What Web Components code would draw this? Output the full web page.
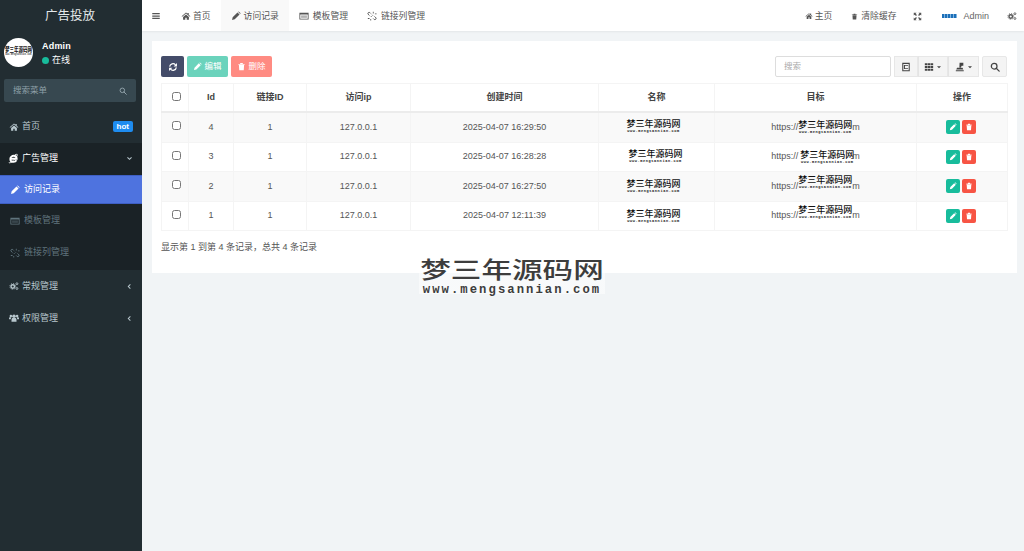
<!DOCTYPE html>
<html lang="zh">
<head>
<meta charset="utf-8">
<title>广告投放</title>
<style>
  html, body { margin: 0; height: 100%; overflow: hidden; }
  body {
    display: flex;
    background: #f1f4f6;
    color: #555;
    font: 9px/1.4 "Liberation Sans", "Noto Sans CJK SC", sans-serif;
  }
</style>
</head>
<body>
<ad-sidebar></ad-sidebar>
<ad-main>
  <ad-topbar></ad-topbar>
  <ad-card>
    <ad-toolbar></ad-toolbar>
    <ad-table></ad-table>
    <ad-pager>显示第 1 到第 4 条记录，总共 4 条记录</ad-pager>
  </ad-card>
</ad-main>
<ad-logo class="mark" size="30.6"></ad-logo>

<script>
const ICONS = {
  bars: '<path d="M3 5h18v3H3zM3 10.500h18v3H3zM3 16h18v3H3z"/>',
  home: '<path d="M12 3.500 1.500 12.500l1.200 1.400L12 6l9.300 7.900 1.200-1.400L18.500 9V4.500h-3v2zM5 14.500V21h5.300v-5h3.400v5H19v-6.500l-7-6z"/>',
  pencil: '<path d="M2.500 21.500 4 15 15.500 3.500l5 5L9 20zM17 2l1.500-1 4.500 4.500L22 7z"/>',
  table: '<path fill-rule="evenodd" d="M1 4h22v16.500H1zM3 8.500v10h18v-10z"/><path d="M5 10.500h14v6H5z" opacity=".45"/>',
  chain: '<g fill="none" stroke="currentColor" stroke-width="2.300"><path d="M9 6 6.500 3.500a3 3 0 0 0-4 4L6 11"/><path d="M15 18l2.500 2.500a3 3 0 0 0 4-4L18 13"/><path d="M11 14l-2-2M14 11l-2-2"/></g><path d="M14 2h2v4h-2zM19 6h4v2h-4zM2 17h4v2H2zM8 19h2v4H8z"/>',
  cogs: '<g fill="none" stroke="currentColor"><circle cx="9" cy="13" r="4.200" stroke-width="3.400"/><circle cx="9" cy="13" r="7" stroke-width="2" stroke-dasharray="2.500 3"/><circle cx="19" cy="6.500" r="2.300" stroke-width="2"/><circle cx="19" cy="18" r="2.300" stroke-width="2"/></g>',
  users: '<circle cx="12" cy="8" r="4.200"/><circle cx="4.500" cy="7" r="3"/><circle cx="19.500" cy="7" r="3"/><path d="M6 21v-5c0-3 2-4 3.500-4h5c1.500 0 3.500 1 3.500 4v5zM0 15v-2.500C0 11 1 10 2.500 10h3.300C4.800 11.500 4.300 13 4.500 15zM24 15v-2.500c0-1.500-1-2.500-2.500-2.500h-3.300c1 1.500 1.500 3 1.300 5z"/>',
  trash: '<path d="M5 7.500h14L18 22H6zM9 2.500h6L16 5h5v1.500H3V5h5z"/>',
  refresh: '<g fill="none" stroke="currentColor" stroke-width="3"><path d="M4 11a8 8 0 0 1 14-4"/><path d="M20 13a8 8 0 0 1-14 4"/></g><path d="M21.500 2.500v8h-8zM2.500 21.500v-8h8z"/>',
  expand: '<path d="M2 2h7.500L7 4.500l3.500 3.500L8 10.500 4.500 7 2 9.500zM22 2v7.500L19.500 7 16 10.500 13.500 8 17 4.500 14.500 2zM2 22v-7.500L4.500 17 8 13.500l2.500 2.500L7 19.500 9.500 22zM22 22h-7.500l2.500-2.500-3.500-3.500 2.500-2.500 3.500 3.500 2.500-2.500z"/>',
  search: '<g fill="none" stroke="currentColor" stroke-width="3"><circle cx="10" cy="10" r="6.800"/><path d="m15 15 7 7" stroke-linecap="round"/></g>',
  grid: '<path d="M2 3h6v5H2zM9 3h6v5H9zM16 3h6v5h-6zM2 9.500h6v5H2zM9 9.500h6v5H9zM16 9.500h6v5h-6zM2 16h6v5H2zM9 16h6v5H9zM16 16h6v5h-6z"/>',
  card: '<path fill-rule="evenodd" d="M3 2h18v20H3zM5.500 4.500v15h13v-15z"/><path d="M7 7h10v2H7zM7 15h10v2H7zM7 7h2.500v10H7z"/>',
  stamp: '<path d="M11 2h9v7h-4l-2 4h-3.500zM5 14h13l2 4H3zM2 19.500h19V22H2z"/>',
  ie: '<g fill="none" stroke="currentColor"><path stroke-width="4" d="M5 12.500h14c0-4-3-6.500-6.500-6.500S5 9 5 13c0 4 3 6.500 7 6.500 3 0 5-1 6.500-3.500"/><path stroke-width="1.800" d="M3 20C1 23 6 22 12 16s10-12 8-13c-1-.5-3 0-5 1"/></g>',
  chevronDown: '<path fill="none" stroke="currentColor" stroke-width="3.600" d="m5 8 7 7 7-7"/>',
  chevronLeft: '<path fill="none" stroke="currentColor" stroke-width="3.600" d="m15 5-7 7 7 7"/>',
  caret: '<path d="M4 9h16l-8 8z"/>'
}

/* every element gets its shadow root the same way */
class AdElement extends HTMLElement {
  constructor () {
    super()
    this.attachShadow({ mode: 'open' }).innerHTML = this.render()
  }
}

class AdIcon extends AdElement {
  render () {
    const name = this.getAttribute('name')
    const size = this.getAttribute('size') || 10
    return `<style>:host { display: inline-flex; flex: none; } svg { display: block; fill: currentColor; }</style>
      <svg width="${size}" height="${size}" viewBox="0 0 24 24">${ICONS[name]}</svg>`
  }
}

class AdLogo extends AdElement {
  render () {
    const size = Number(this.getAttribute('size') || 9)
    return `<style>
      :host {
        display: inline-flex;
        flex: none;
        flex-direction: column;
        align-items: center;
        color: #111;
        font-family: "Liberation Sans", "Noto Sans CJK SC", sans-serif;
        font-weight: 500;
        line-height: 1;
      }
      :host(.mark) {
        position: absolute;
        left: 419px;
        top: 258px;
        width: 186px;
        height: 36px;
        color: #3d3d3d;
        background: linear-gradient(transparent 42%, rgba(255, 255, 255, .5) 42%);
      }
      :host(.mark) b { transform: scaleY(.75); transform-origin: top; margin-bottom: -7px; }
      :host(.round) { font-weight: 700; transform: scaleY(1.500); }
      b { font-size: ${size}px; font-weight: inherit; white-space: nowrap; }
      i {
        margin-top: ${size * 0.07}px;
        font: bold ${size * 0.4}px/1.100 "Liberation Mono", monospace;
        letter-spacing: ${size * 0.067}px;
        white-space: nowrap;
      }
    </style><b>梦三年源码网</b><i>www.mengsannian.com</i>`
  }
}

class AdMenuItem extends AdElement {
  render () {
    const icon = this.getAttribute('icon')
    const arrow = this.getAttribute('arrow')
    const badge = this.getAttribute('badge')
    return `<style>
      :host {
        display: flex;
        align-items: center;
        gap: 3px;
        height: var(--h, 32px);
        padding: 0 9px;
        color: #b8c7ce;
      }
      :host([sub]) { padding-left: 10px; gap: 4px; color: #60747d; }
      :host([open]) {
        box-sizing: border-box;
        padding: 0 9px 2px 8px;
        background: #1a2226;
        color: #fff;
      }
      :host([active]) {
        background: #4e73df;
        color: #fff;
        border-top: 1px solid #3e5fc4;
        border-bottom: 1px solid #3e5fc4;
        box-sizing: border-box;
      }
      .text { flex: 1; }
      .badge {
        background: #1e8cf0;
        color: #fff;
        border-radius: 2px;
        padding: 0 4px;
        font-size: 8px;
        font-weight: bold;
        line-height: 11px;
      }
      .arrow { color: #b8c7ce; }
    </style>
    <ad-icon name="${icon}" size="${this.getAttribute('icon-size') || 10}"></ad-icon>
    <span class="text"><slot></slot></span>
    ${badge ? `<span class="badge">${badge}</span>` : ''}
    ${arrow ? `<ad-icon class="arrow" name="${arrow}" size="7"></ad-icon>` : ''}`
  }
}

class AdSidebar extends AdElement {
  render () {
    return `<style>
      :host {
        display: block;
        flex: none;
        width: 142px;
        height: 100%;
        background: #222d32;
        color: #b8c7ce;
      }
      .brand {
        height: 31px;
        padding-right: 2px;
        line-height: 33px;
        text-align: center;
        color: #e4e9eb;
        font-size: 12.500px;
      }
      .user { display: flex; gap: 9px; padding: 7px 4px 0; height: 41px; }
      .avatar {
        flex: none;
        display: flex;
        align-items: center;
        justify-content: center;
        width: 29px;
        height: 29px;
        border-radius: 50%;
        background: #fff;
        overflow: hidden;
      }
      .info { padding-top: 1px; color: #fff; line-height: 14px; }
      .info b { display: block; letter-spacing: .2px; }
      .online { display: flex; align-items: center; gap: 3px; }
      .dot { width: 7px; height: 7px; border-radius: 50%; background: #18bc9c; }
      .search {
        display: flex;
        align-items: center;
        justify-content: space-between;
        height: 23px;
        margin: 0 6px 8px 4px;
        padding: 0 9px;
        border-radius: 2px;
        background: #374850;
        color: #8fa0a8;
      }
      .search span { font-size: 8.500px; }
      .sub { background: #1a2226; padding-bottom: 2px; }
    </style>
    <div class="brand">广告投放</div>
    <div class="user">
      <div class="avatar"><ad-logo class="round" size="4.500"></ad-logo></div>
      <div class="info"><b>Admin</b><span class="online"><span class="dot"></span>在线</span></div>
    </div>
    <div class="search"><span>搜索菜单</span><ad-icon name="search" size="8"></ad-icon></div>
    <ad-menu-item icon="home" badge="hot" style="--h: 33px">首页</ad-menu-item>
    <ad-menu-item icon="ie" icon-size="11" arrow="chevronDown" open>广告管理</ad-menu-item>
    <div class="sub">
      <ad-menu-item icon="pencil" sub active style="--h: 29px">访问记录</ad-menu-item>
      <ad-menu-item icon="table" sub style="--h: 33px">模板管理</ad-menu-item>
      <ad-menu-item icon="chain" sub style="--h: 31px">链接列管理</ad-menu-item>
    </div>
    <ad-menu-item icon="cogs" arrow="chevronLeft">常规管理</ad-menu-item>
    <ad-menu-item icon="users" arrow="chevronLeft">权限管理</ad-menu-item>`
  }
}

class AdMain extends AdElement {
  render () {
    return `<style>
      :host { display: flex; flex-direction: column; flex: 1; min-width: 0; }
    </style><slot></slot>`
  }
}

class AdTopbar extends AdElement {
  render () {
    return `<style>
      :host {
        display: flex;
        align-items: stretch;
        height: 31px;
        background: #fff;
        box-shadow: 0 1px 2px rgba(0, 0, 0, .06);
        color: #555;
        font-size: 8.800px;
      }
      .item {
        display: flex;
        align-items: center;
        gap: 4px;
        box-sizing: border-box;
        padding: 1px 10px 0;
      }
      .on { background: #f9f9f9; }
      .spacer { flex: 1; }
      .mini {
        width: 15px;
        height: 4px;
        background: repeating-linear-gradient(90deg, #1d6fb8 0 2px, #7fb4e0 2px 3px);
      }
      .admin { gap: 6px; padding: 1px 9px 0 10px; color: #666; font-size: 9px; }
    </style>
    <div class="item" style="padding: 1px 10px 0 9px"><ad-icon name="bars"></ad-icon></div>
    <div class="item" style="gap: 2px"><ad-icon name="home"></ad-icon>首页</div>
    <div class="item on" style="gap: 3px"><ad-icon name="pencil"></ad-icon>访问记录</div>
    <div class="item"><ad-icon name="table"></ad-icon>模板管理</div>
    <div class="item" style="padding-left: 9px"><ad-icon name="chain"></ad-icon>链接列管理</div>
    <div class="spacer"></div>
    <div class="item" style="gap: 2px"><ad-icon name="home" size="8"></ad-icon>主页</div>
    <div class="item" style="gap: 3px; padding: 1px 7px 0 9px"><ad-icon name="trash" size="7"></ad-icon>清除缓存</div>
    <div class="item"><ad-icon name="expand" size="9"></ad-icon></div>
    <div class="item admin"><span class="mini"></span>Admin</div>
    <div class="item" style="padding: 1px 7px 0 9px"><ad-icon name="cogs" size="10"></ad-icon></div>`
  }
}

class AdCard extends AdElement {
  render () {
    return `<style>
      :host {
        display: block;
        margin: 10px 7px 0 10px;
        padding: 15px 10px 0 9px;
        height: 232px;
        box-sizing: border-box;
        background: #fff;
      }
    </style><slot></slot>`
  }
}

class AdButton extends AdElement {
  render () {
    return `<style>
      :host {
        display: inline-flex;
        align-items: center;
        justify-content: center;
        gap: 2px;
        box-sizing: border-box;
        height: 21px;
        border-radius: 2px;
        color: #fff;
        background: var(--bg);
        border: 1px solid var(--line, transparent);
        font-size: 8.500px;
      }
    </style><slot></slot>`
  }
}

class AdToolbar extends AdElement {
  render () {
    return `<style>
      :host { display: flex; align-items: center; gap: 3px; height: 21px; margin-bottom: 6px; }
      .spacer { flex: 1; }
      .input {
        box-sizing: border-box;
        width: 116px;
        height: 21px;
        padding: 0 8px;
        line-height: 19px;
        border: 1px solid #ddd;
        border-radius: 2px;
        color: #aaa;
        font-size: 8.500px;
      }
      .group { display: flex; }
      ad-button.tool { --bg: #f4f4f4; --line: #e7e7e7; color: #444; border-radius: 0; }
      .group ad-button + ad-button { border-left: 1px solid #e4e4e4; }
    </style>
    <ad-button style="--bg: #444c69; width: 23px"><ad-icon name="refresh"></ad-icon></ad-button>
    <ad-button style="--bg: #6bd3bc; width: 41px"><ad-icon name="pencil" size="9"></ad-icon>编辑</ad-button>
    <ad-button style="--bg: #ff8b82; width: 41px"><ad-icon name="trash" size="9"></ad-icon>删除</ad-button>
    <div class="spacer"></div>
    <div class="input">搜索</div>
    <div class="group">
      <ad-button class="tool" style="width: 24px"><ad-icon name="card"></ad-icon></ad-button>
      <ad-button class="tool" style="width: 30px"><ad-icon name="grid"></ad-icon><ad-icon name="caret" size="6"></ad-icon></ad-button>
      <ad-button class="tool" style="width: 31px"><ad-icon name="stamp"></ad-icon><ad-icon name="caret" size="6"></ad-icon></ad-button>
    </div>
    <ad-button class="tool" style="width: 25px; border-radius: 2px"><ad-icon name="search"></ad-icon></ad-button>`
  }
}

/* nudges: the two logos of a row are not quite aligned in the reference */
const RECORDS = [
  { id: 4, time: '2025-04-07 16:29:50', nameX: 6, nameY: 0, targetX: 0, targetY: 1 },
  { id: 3, time: '2025-04-07 16:28:28', nameX: 2, nameY: 0, targetX: 2, targetY: 2 },
  { id: 2, time: '2025-04-07 16:27:50', nameX: 6, nameY: 2, targetX: 0, targetY: -7 },
  { id: 1, time: '2025-04-07 12:11:39', nameX: 6, nameY: 3, targetX: 0, targetY: -6 }
]

class AdTable extends AdElement {
  render () {
    const rows = RECORDS.map((r) => `<tr>
      <td><input type="checkbox"></td>
      <td>${r.id}</td>
      <td>1</td>
      <td>127.0.0.1</td>
      <td>${r.time}</td>
      <td><div class="cell"><ad-logo style="margin: ${r.nameY}px ${r.nameX}px 0 0"></ad-logo></div></td>
      <td><div class="cell">https://<ad-logo style="margin: ${r.targetY}px ${-r.targetX}px 0 ${r.targetX}px"></ad-logo>m</div></td>
      <td><span class="ops"><ad-button style="--bg: #18bc9c; width: 14px; height: 14px"><ad-icon name="pencil" size="8"></ad-icon></ad-button><ad-button style="--bg: #f75444; width: 14px; height: 14px"><ad-icon name="trash" size="8"></ad-icon></ad-button></span></td>
    </tr>`).join('')
    return `<style>
      :host { display: block; }
      table { width: 846px; table-layout: fixed; border-collapse: collapse; color: #555; }
      th, td { border: 1px solid #f4f4f4; text-align: center; padding: 0; }
      th { height: 27px; color: #444; font-weight: bold; border-bottom: 2px solid #ececec; }
      td { height: 28.500px; }
      tbody tr:nth-child(odd) td { background: #f9f9f9; }
      input { display: block; width: 9px; height: 9px; margin: -2px auto 0 9.500px; }
      tbody input { margin-top: -3px; }
      .cell { display: flex; align-items: center; justify-content: center; height: 28px; }
      .ops { display: inline-flex; gap: 2px; margin-right: 2px; vertical-align: middle; }
    </style>
    <table>
      <colgroup><col style="width: 27px"><col style="width: 45px"><col style="width: 73px"><col style="width: 104px"><col style="width: 188px"><col style="width: 116px"><col style="width: 202px"><col style="width: 91px"></colgroup>
      <thead><tr><th><input type="checkbox"></th><th>Id</th><th>链接ID</th><th>访问ip</th><th>创建时间</th><th>名称</th><th>目标</th><th>操作</th></tr></thead>
      <tbody>${rows}</tbody>
    </table>`
  }
}

class AdPager extends AdElement {
  render () {
    return `<style>
      :host { display: block; margin-top: 10px; color: #555; line-height: 13px; }
    </style><slot></slot>`
  }
}

window.customElements.define('ad-icon', AdIcon)
window.customElements.define('ad-logo', AdLogo)
window.customElements.define('ad-button', AdButton)
window.customElements.define('ad-menu-item', AdMenuItem)
window.customElements.define('ad-sidebar', AdSidebar)
window.customElements.define('ad-main', AdMain)
window.customElements.define('ad-topbar', AdTopbar)
window.customElements.define('ad-card', AdCard)
window.customElements.define('ad-toolbar', AdToolbar)
window.customElements.define('ad-table', AdTable)
window.customElements.define('ad-pager', AdPager)
</script>
</body>
</html>
